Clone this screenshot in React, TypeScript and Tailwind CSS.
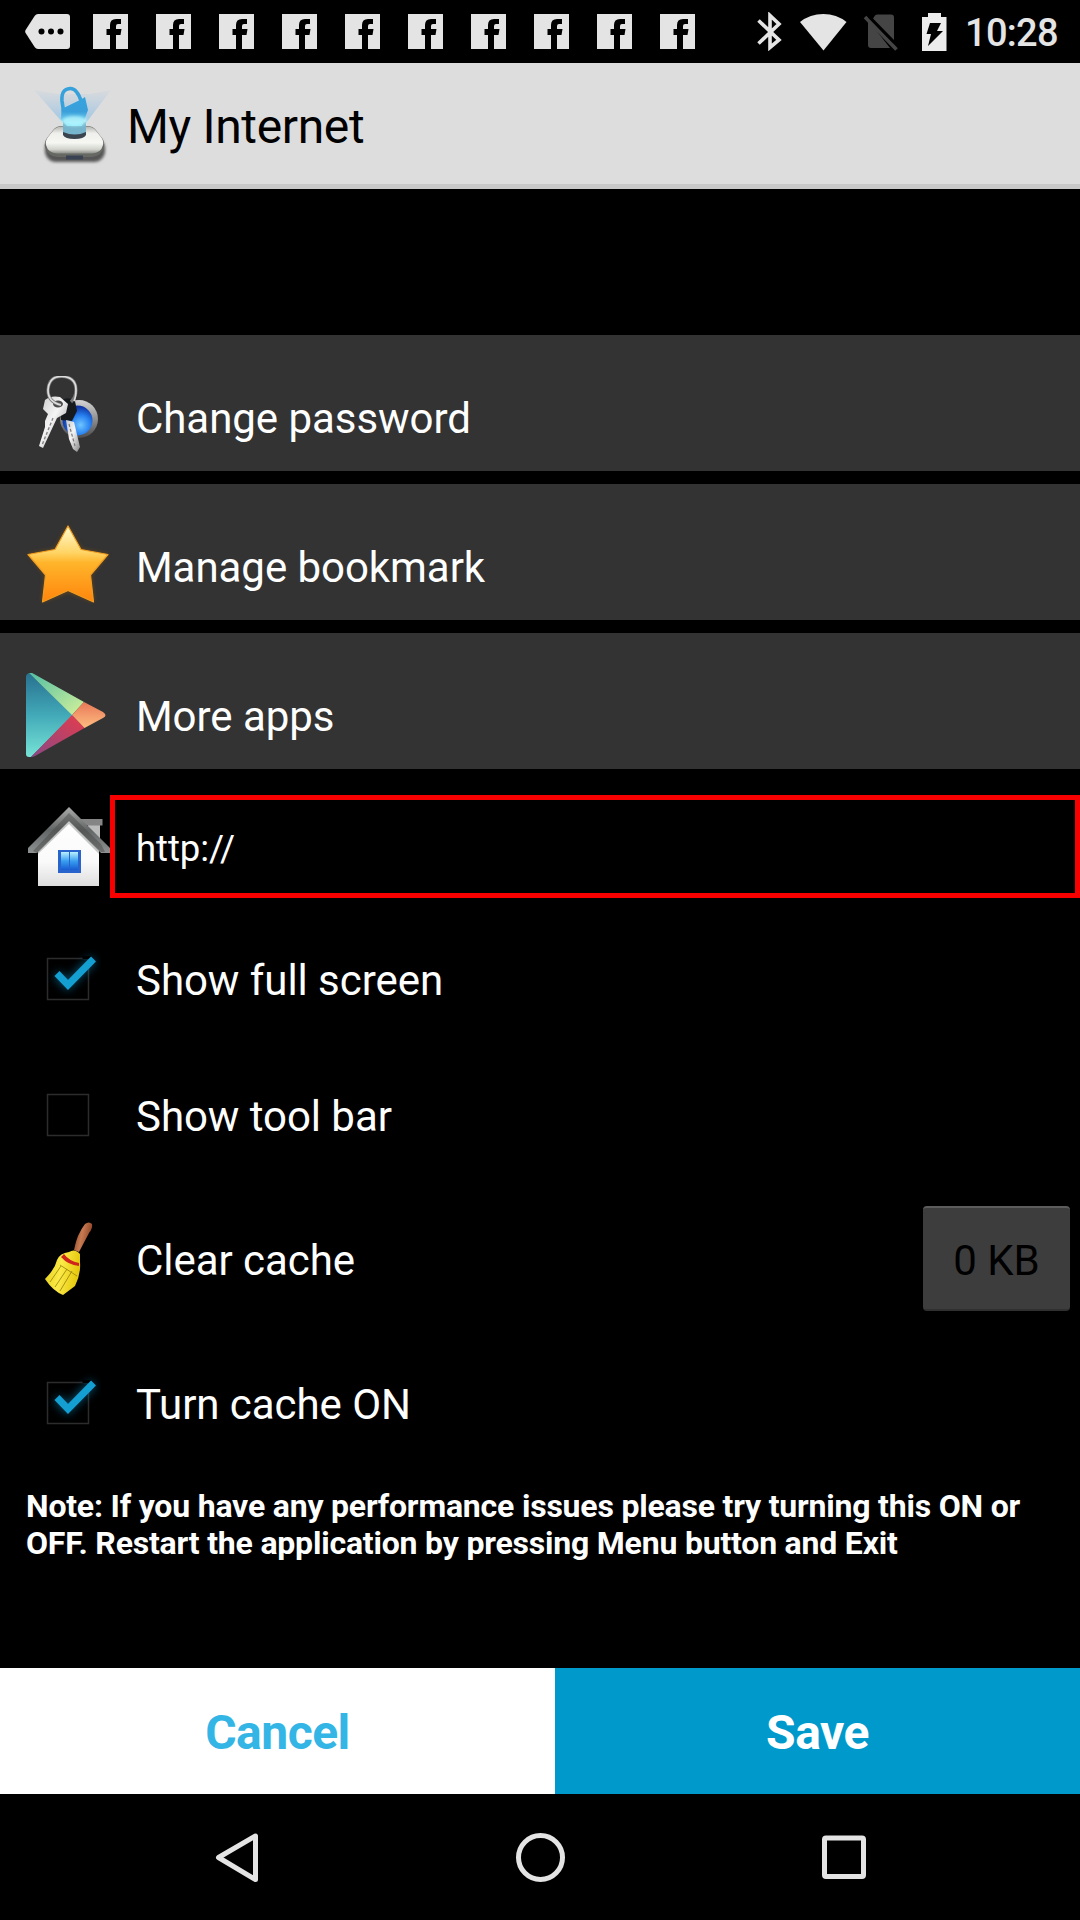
import React from "react";

function MessageIcon() {
  return (
    <svg className="ml-[25px] shrink-0" width="45" height="35" viewBox="0 0 45 35">
      <path d="M13 0H42Q45 0 45 3V32Q45 35 42 35H13Q11 35 9.800 33.200L.6 19Q-.3 17.500 .6 16L9.800 1.800Q11 0 13 0Z" fill="#e4e4e4" />
      <g fill="#000">
        <circle cx="16.500" cy="17.500" r="3" />
        <circle cx="26" cy="17.500" r="3" />
        <circle cx="35.500" cy="17.500" r="3" />
      </g>
    </svg>
  );
}

function FacebookIcon() {
  return (
    <svg className="shrink-0" width="35" height="35" viewBox="0 0 35 35">
      <path fill="#e4e4e4" d="M0 0H35V35H23V21H27.500L28.500 15H23V12Q23 10 25 10H28V5H23Q17 5 17 11V15H13.500V21H17V35H0Z" />
    </svg>
  );
}

function StatusIcons() {
  return (
    <div className="ml-auto flex h-full items-center">
      <svg className="mr-[17px]" width="25" height="39" viewBox="758 12 25 39">
        <path d="M759.500 20.500L780 40L771 47.500V15.500L780 24L759.500 43.500" fill="none" stroke="#e4e4e4" strokeWidth="3.600" />
      </svg>
      <svg className="mr-[16px]" width="48" height="38" viewBox="800 12 48 38">
        <path d="M801 21Q811 13 824.300 13T847.500 21L824.500 49.500Z" fill="#e4e4e4" />
      </svg>
      <svg className="mr-[22px]" width="36" height="38" viewBox="863 13 36 38">
        <path d="M868 20V45Q868 48 871 48H890ZM875 15.500Q876 14.500 877.500 14.500H891Q894 14.500 894 17.500V40L873 18.500Z" fill="#454545" />
        <path d="M865 17L896.500 49.500" stroke="#454545" strokeWidth="3.600" />
        <path d="M869 17L894 42.500" stroke="#000" strokeWidth="2" />
      </svg>
      <svg className="mr-[18px]" width="26" height="40" viewBox="921 11 26 40">
        <path d="M928 12H941V16H946.500V50H922V16H928Z" fill="#ececec" />
        <path d="M930 22H941L937 30H943L928 45L931 33H926.500Z" fill="#000" />
      </svg>
      <span className="mt-[2px] mr-[24px] w-[91px] whitespace-nowrap text-[38px] leading-[44px] tracking-[-0.7px] font-medium text-[#e4e4e4]">10:28</span>
    </div>
  );
}

function LockLogo() {
  return (
    <svg className="shrink-0" width="90" height="84" viewBox="30 82 90 84">
      <defs>
        <linearGradient id="beam" x1="0" y1="0" x2="0" y2="1">
          <stop offset="0" stopColor="#9dbfe0" stopOpacity=".08" />
          <stop offset=".55" stopColor="#8bbde6" stopOpacity=".55" />
          <stop offset="1" stopColor="#7ee8fb" />
        </linearGradient>
        <linearGradient id="lock" x1="0" y1="0" x2="0" y2="1">
          <stop offset="0" stopColor="#35a4dd" />
          <stop offset=".5" stopColor="#3b9fda" />
          <stop offset="1" stopColor="#8be9fb" />
        </linearGradient>
        <linearGradient id="body" x1="0" y1="0" x2="0" y2="1">
          <stop offset="0" stopColor="#b5b7b3" />
          <stop offset=".25" stopColor="#efefeb" />
          <stop offset=".6" stopColor="#f6f7f3" />
          <stop offset=".85" stopColor="#d0d2cb" />
          <stop offset="1" stopColor="#8b8d87" />
        </linearGradient>
        <filter id="soft" x="-20%" y="-30%" width="140%" height="160%"><feGaussianBlur stdDeviation="1.500" /></filter>
      </defs>
      <rect x="45" y="138" width="60" height="24" rx="11" fill="#555" filter="url(#soft)" />
      <path d="M34 90L58 94H90L111 90L86 123V133H63V123Z" fill="url(#beam)" />
      <path d="M62 126H87Q92 126 95 129L102 138Q105 142 104 147Q102 156 92 157H57Q47 156 45 147Q44 142 47 138L54 129Q57 126 62 126Z" fill="#666864" />
      <path d="M62 126.500H87Q92 126.500 95 129.500L101 137Q104 141 103 145Q101 153 92 153.500H57Q48 153 46 145Q45 141 48 137L54 129.500Q57 126.500 62 126.500Z" fill="url(#body)" />
      <rect x="66" y="155.500" width="17" height="4" fill="#394252" />
      <path d="M63 130H86V135Q84 139 74.500 139T63 135Z" fill="#3b4550" />
      <path d="M63 122H86V132Q75 137 63 132Z" fill="#76b5cc" />
      <path d="M63.500 111L62 101Q61 89 70 88.500Q77 88 81.500 102" fill="none" stroke="#36a1da" strokeWidth="3.600" />
      <path d="M61.500 109L81 99.500L85 97L88 110L82 126H67L61 119Z" fill="url(#lock)" />
      <ellipse cx="74.500" cy="121" rx="12.500" ry="5" fill="#bffaff" opacity=".75" filter="url(#soft)" />
    </svg>
  );
}

function KeysIcon() {
  return (
    <svg className="h-[86px] w-[84px]" viewBox="27 376 84 86">
      <defs>
        <radialGradient id="blue" cx=".6" cy=".65" r=".6">
          <stop offset="0" stopColor="#70c6ff" />
          <stop offset=".55" stopColor="#267ff0" />
          <stop offset="1" stopColor="#1035a4" />
        </radialGradient>
        <linearGradient id="silver" x1="0" y1="0" x2="1" y2="1">
          <stop offset="0" stopColor="#c8c8c8" />
          <stop offset=".45" stopColor="#f5f5f5" />
          <stop offset="1" stopColor="#858585" />
        </linearGradient>
        <linearGradient id="rim" x1="0" y1="0" x2="0" y2="1">
          <stop offset="0" stopColor="#d5d5d5" />
          <stop offset="1" stopColor="#4b4b4b" />
        </linearGradient>
      </defs>
      <circle cx="80" cy="419" r="19" fill="url(#rim)" />
      <circle cx="78.500" cy="420.500" r="15" fill="url(#blue)" />
      <path d="M60 402Q69 395 76 401L78 411L73 421L62 420Z" fill="#171b1e" />
      <path d="M67 420L75 422L81 447L78 452L74 449L70 439Z" fill="url(#silver)" />
      <path d="M70 424L76 446" stroke="#777" strokeWidth="1.200" strokeDasharray="3 2" />
      <path d="M46 400Q52 395 61 397L69 404L67 413L58 418L44 448L40 446L46 427L46 421L49 414L44 409Z" fill="url(#silver)" />
      <path d="M54 418L43 445" stroke="#858585" strokeWidth="1.400" strokeDasharray="3 2" />
      <ellipse cx="59" cy="404" rx="5" ry="3.500" fill="#4b4b4b" />
      <path d="M62 405Q49 402 49 390Q50 376 63 376.500Q77 377 77 390Q77 397 72 402" fill="none" stroke="#777" strokeWidth="3.200" />
      <path d="M62 405Q49 402 49 390Q50 376 63 376.500Q77 377 77 390Q77 397 75 401" fill="none" stroke="#ddd" strokeWidth="1.700" />
    </svg>
  );
}

function StarIcon() {
  return (
    <svg className="h-[90px] w-[90px]" viewBox="23 523 90 90">
      <defs>
        <linearGradient id="star" x1="0" y1="0" x2="0" y2="1">
          <stop offset="0" stopColor="#fffbd0" />
          <stop offset=".35" stopColor="#ffd465" />
          <stop offset=".48" stopColor="#ffb52b" />
          <stop offset="1" stopColor="#ff850d" />
        </linearGradient>
        <filter id="starGlow" x="-20%" y="-20%" width="140%" height="140%"><feGaussianBlur stdDeviation="2" /></filter>
      </defs>
      <path d="M68 526L81 549L108 554L91 575L94 602L68 592L42 602L45 575L28 554L55 549Z" fill="#9d5b07" opacity=".5" filter="url(#starGlow)" />
      <path d="M68 526L81 549.500L108 554.500L90.500 575L93.500 602L68 590.500L42.500 602L45.500 575L28 554.500L55 549.500Z" fill="url(#star)" stroke="#f29d20" strokeWidth="1.200" strokeLinejoin="round" />
    </svg>
  );
}

function PlayIcon() {
  return (
    <svg className="h-[88px] w-[86px]" viewBox="25 673 86 88">
      <defs>
        <linearGradient id="teal" x1="0" y1="0" x2="0" y2="1"><stop offset="0" stopColor="#28708f" /><stop offset=".5" stopColor="#42a9b8" /><stop offset="1" stopColor="#77e4d6" /></linearGradient>
        <linearGradient id="green" x1="0" y1="0" x2="1" y2="1"><stop offset="0" stopColor="#52bea4" /><stop offset="1" stopColor="#d5f29a" /></linearGradient>
        <linearGradient id="red" x1="1" y1="0" x2="0" y2="1"><stop offset="0" stopColor="#e53b4b" /><stop offset="1" stopColor="#894987" /></linearGradient>
        <linearGradient id="orange" x1="0" y1="0" x2="0" y2="1"><stop offset="0" stopColor="#e87858" /><stop offset="1" stopColor="#ffbd80" /></linearGradient>
      </defs>
      <path d="M29 673Q26 674 26 677V754Q26 757 29 757H31L73 715Z" fill="url(#teal)" />
      <path d="M29 673Q31 672 34 674L84 702L72 715Z" fill="url(#green)" />
      <path d="M72 715L84.500 728L35 756Q33 757 31 757Z" fill="url(#red)" />
      <path d="M84 702L103 712Q108 715.500 103 718L84.500 728L72 715Z" fill="url(#orange)" />
    </svg>
  );
}

function HouseIcon() {
  return (
    <svg className="ml-[26px] shrink-0" width="84" height="84" viewBox="26 804 84 84">
      <defs>
        <linearGradient id="wall" x1="0" y1="0" x2="0" y2="1"><stop offset="0" stopColor="#ffffff" /><stop offset=".65" stopColor="#fafafa" /><stop offset="1" stopColor="#dedede" /></linearGradient>
        <linearGradient id="roof" x1="0" y1="0" x2="0" y2="1"><stop offset="0" stopColor="#aaa" /><stop offset=".5" stopColor="#636666" /><stop offset="1" stopColor="#8f9292" /></linearGradient>
        <linearGradient id="pane" x1="0" y1="0" x2="0" y2="1"><stop offset="0" stopColor="#baf0ff" /><stop offset=".5" stopColor="#389ff0" /><stop offset="1" stopColor="#175bd2" /></linearGradient>
      </defs>
      <rect x="88" y="822" width="12" height="20" fill="#bbb" />
      <rect x="81" y="818" width="21.500" height="6.500" fill="#858585" />
      <path d="M38 846L69 815L99 846V885H38Z" fill="url(#wall)" />
      <path d="M38 853V845L69 815L99 845V853L69 823Z" fill="#989b9b" opacity=".55" />
      <path d="M69 806L110 847V852H101L69 820L37 852H28V847Z" fill="url(#roof)" />
      <path d="M69 812L101 843L105 851H101L69 820L37 852L33 850Z" fill="#444" opacity=".45" />
      <rect x="58" y="849" width="23" height="23" fill="#2864cc" />
      <path d="M61 851H69V869H61ZM70 851H78V869H70Z" fill="url(#pane)" />
    </svg>
  );
}

function BroomIcon() {
  return (
    <svg className="h-[80px] w-[54px]" viewBox="42 1219 54 80">
      <defs>
        <linearGradient id="bristles" x1="0" y1="0" x2="1" y2=".2"><stop offset="0" stopColor="#e3ce16" /><stop offset=".5" stopColor="#fbea48" /><stop offset="1" stopColor="#e6c90e" /></linearGradient>
        <linearGradient id="handle" x1="0" y1="0" x2="1" y2=".3"><stop offset="0" stopColor="#7d3e20" /><stop offset=".5" stopColor="#c87b52" /><stop offset="1" stopColor="#8f4426" /></linearGradient>
      </defs>
      <path d="M75 1248Q78 1232 86 1222Q90 1219 93 1222Q94 1226 90 1231L80 1250Z" fill="url(#handle)" />
      <path d="M70 1250Q76 1246 81 1252L81 1260Q82 1272 76 1284L64 1293Q54 1289 46 1277Q56 1267 58 1258Q61 1251 70 1250Z" fill="url(#bristles)" />
      <path d="M65 1252Q70 1259 80 1261V1264Q69 1263 62 1255Z" fill="#cf241c" />
      <path d="M62 1264L51 1280M68 1267L56 1285M73 1269L61 1289M61 1263L78 1274" stroke="#97810b" strokeWidth="1" fill="none" opacity=".8" />
    </svg>
  );
}

function Checkbox({ checked = false }: { checked?: boolean }) {
  return (
    <svg className="h-[66px] w-[66px]" viewBox="35.500 948 66 66">
      <rect x="48" y="958.500" width="41" height="41" fill="none" stroke="#2c2c2c" strokeWidth="1.500" />
      {checked && (
        <g fill="none">
          <path d="M57 974L68 985L94 959" stroke="#087aa8" strokeWidth="9" className="opacity-60 blur-[4px]" />
          <path d="M83 957.500H90V965" stroke="#000" strokeWidth="3" />
          <path d="M57.500 973.500L68.500 985L94 959" stroke="#149fd3" strokeWidth="7" />
        </g>
      )}
    </svg>
  );
}

function MenuItem({ icon, label }: { icon: React.ReactNode; label: string }) {
  return (
    <button className="flex h-[136px] w-full items-center bg-[#333333] pt-[31px] text-left">
      <span className="flex w-[136px] justify-center">{icon}</span>
      <span>{label}</span>
    </button>
  );
}

function Option({ icon, label, children }: { icon: React.ReactNode; label: string; children?: React.ReactNode }) {
  return (
    <div className={children ? "flex h-[152px] items-center" : "flex h-[136px] items-center"}>
      <span className="flex w-[136px] justify-center">{icon}</span>
      <span className="grow">{label}</span>
      {children}
    </div>
  );
}

export default function App() {
  return (
    <main className="flex h-[1920px] w-[1080px] flex-col overflow-hidden bg-black font-['Roboto',sans-serif] text-[42px] leading-[50px] tracking-[-0.05px] text-white">
      <div className="flex h-[63px] shrink-0 items-center">
        <MessageIcon />
        <div className="ml-[23px] flex gap-[28px]">
          {Array.from({ length: 10 }, (_, i) => <FacebookIcon key={i} />)}
        </div>
        <StatusIcons />
      </div>
      <header className="flex h-[126px] shrink-0 items-center border-b-[5px] border-[#c8c8c8] bg-[#dddddd] pl-[30px] text-black">
        <LockLogo />
        <h1 className="ml-[7px] pt-[7px] text-[48px] leading-[56px] tracking-[-0.35px]">My Internet</h1>
      </header>
      <nav className="mt-[146px] flex shrink-0 flex-col gap-[13px]">
        <MenuItem icon={<KeysIcon />} label="Change password" />
        <MenuItem icon={<StarIcon />} label="Manage bookmark" />
        <MenuItem icon={<PlayIcon />} label="More apps" />
      </nav>
      <div className="mt-[26px] flex h-[103px] shrink-0 items-center">
        <HouseIcon />
        <div className="flex h-full grow items-center border-[5px] border-[#f80000] pt-[5px] pl-[21px] text-[36.500px]">http://</div>
      </div>
      <section className="mt-[15px] shrink-0">
        <Option icon={<Checkbox checked />} label="Show full screen" />
        <Option icon={<Checkbox />} label="Show tool bar" />
        <Option icon={<BroomIcon />} label="Clear cache">
          <button className="mr-[10px] mb-[5px] h-[105px] w-[147px] rounded-[4px] border-t-2 border-b-2 border-t-[#5c5c5c] border-b-[#303030] bg-[#3d3d3d] pt-[4px] text-black">0 KB</button>
        </Option>
        <Option icon={<Checkbox checked />} label="Turn cache ON" />
      </section>
      <p className="mt-[15px] pl-[26px] text-[32px] leading-[37px] tracking-[-0.2px] font-bold">
        Note: If you have any performance issues please try turning this ON or<br />OFF. Restart the application by pressing Menu button and Exit
      </p>
      <div className="mt-auto flex h-[126px] shrink-0 text-[48px] leading-[56px] tracking-[-0.5px] font-bold">
        <button className="w-[555px] bg-white pt-[3px] text-[#33b5e5]">Cancel</button>
        <button className="grow bg-[#0099cc] pt-[3px]">Save</button>
      </div>
      <div className="flex h-[126px] shrink-0 items-center pl-[214px]">
        <svg width="46" height="52" viewBox="214 1831 46 52"><path d="M218.500 1857.500L255.500 1836V1879.500Z" fill="none" stroke="#e4e4e4" strokeWidth="5" strokeLinejoin="round" /></svg>
        <svg className="ml-[254px]" width="52" height="52" viewBox="0 0 52 52"><circle cx="26.500" cy="26.500" r="22" fill="none" stroke="#e4e4e4" strokeWidth="5" /></svg>
        <svg className="ml-[254px]" width="48" height="48" viewBox="0 0 48 48"><rect x="4.500" y="5" width="39" height="38.500" rx="1.500" fill="none" stroke="#e4e4e4" strokeWidth="5" /></svg>
      </div>
    </main>
  );
}
